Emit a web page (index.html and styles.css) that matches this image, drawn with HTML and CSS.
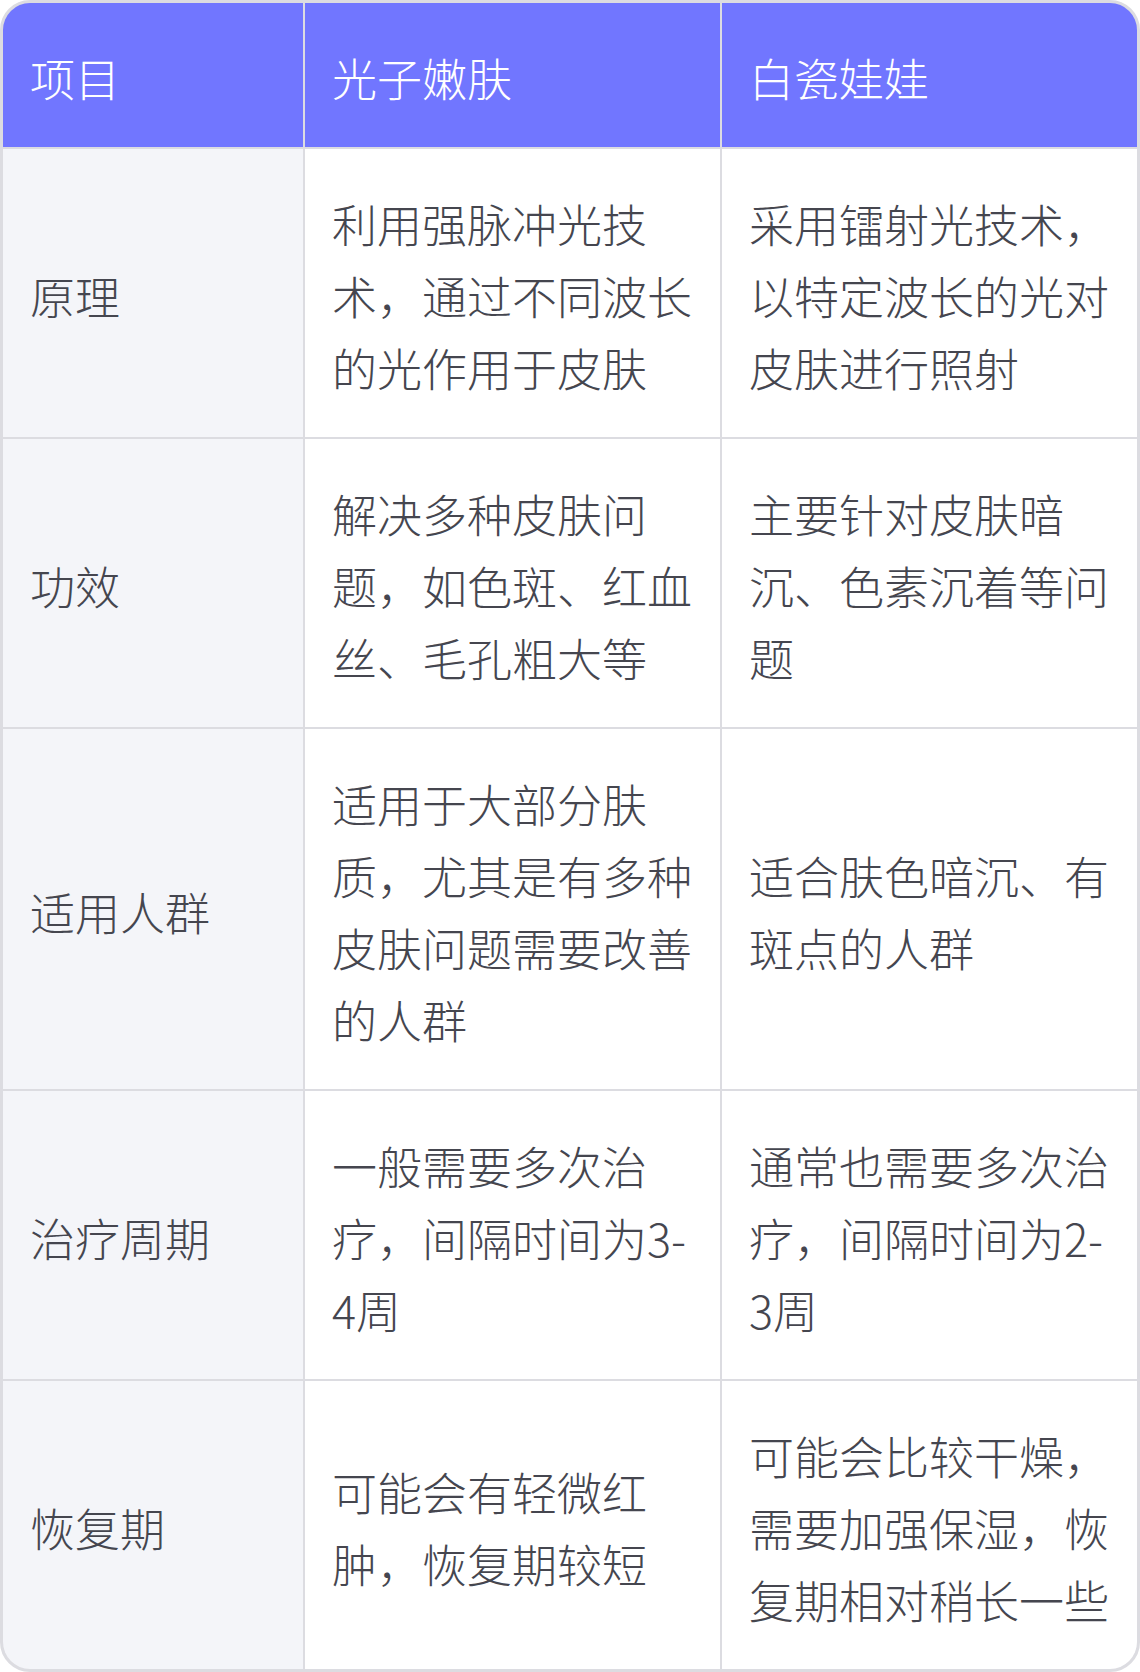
FILE: index.html
```html
<!DOCTYPE html>
<html lang="zh-CN">
<head>
<meta charset="utf-8">
<title>光子嫩肤 vs 白瓷娃娃</title>
<link rel="stylesheet" href="styles.css">
</head>
<body>
<div class="table">
  <div class="cell head">项目</div>
  <div class="cell head">光子嫩肤</div>
  <div class="cell head">白瓷娃娃</div>

  <div class="cell label">原理</div>
  <div class="cell">利用强脉冲光技术，通过不同波长的光作用于皮肤</div>
  <div class="cell">采用镭射光技术，以特定波长的光对皮肤进行照射</div>

  <div class="cell label">功效</div>
  <div class="cell">解决多种皮肤问题，如色斑、红血丝、毛孔粗大等</div>
  <div class="cell">主要针对皮肤暗沉、色素沉着等问题</div>

  <div class="cell label">适用人群</div>
  <div class="cell">适用于大部分肤质，尤其是有多种皮肤问题需要改善的人群</div>
  <div class="cell">适合肤色暗沉、有斑点的人群</div>

  <div class="cell label">治疗周期</div>
  <div class="cell">一般需要多次治疗，间隔时间为3-4周</div>
  <div class="cell">通常也需要多次治疗，间隔时间为2-3周</div>

  <div class="cell label">恢复期</div>
  <div class="cell">可能会有轻微红肿，恢复期较短</div>
  <div class="cell">可能会比较干燥，需要加强保湿，恢复期相对稍长一些</div>
</div>
</body>
</html>
```
FILE: styles.css
```css
html, body {
  margin: 0;
  padding: 0;
  background: #ffffff;
}

body {
  font-family: "Noto Sans CJK SC", "Noto Sans", sans-serif;
  font-weight: 300;
}

.table {
  width: 1140px;
  box-sizing: border-box;
  display: grid;
  grid-template-columns: 300px 415px 415px;
  gap: 2px;
  background: #dcdce1;
  border: 3px solid #dcdce1;
  border-radius: 30px;
  overflow: hidden;
}

.cell {
  display: flex;
  align-items: center;
  padding: 39px 27px 33px;
  font-size: 45px;
  line-height: 72px;
  color: #45464f;
  background: #ffffff;
  word-break: break-all;
}

.head {
  background: #7176ff;
  color: #ffffff;
}

.label {
  background: #f4f5f9;
}
```
